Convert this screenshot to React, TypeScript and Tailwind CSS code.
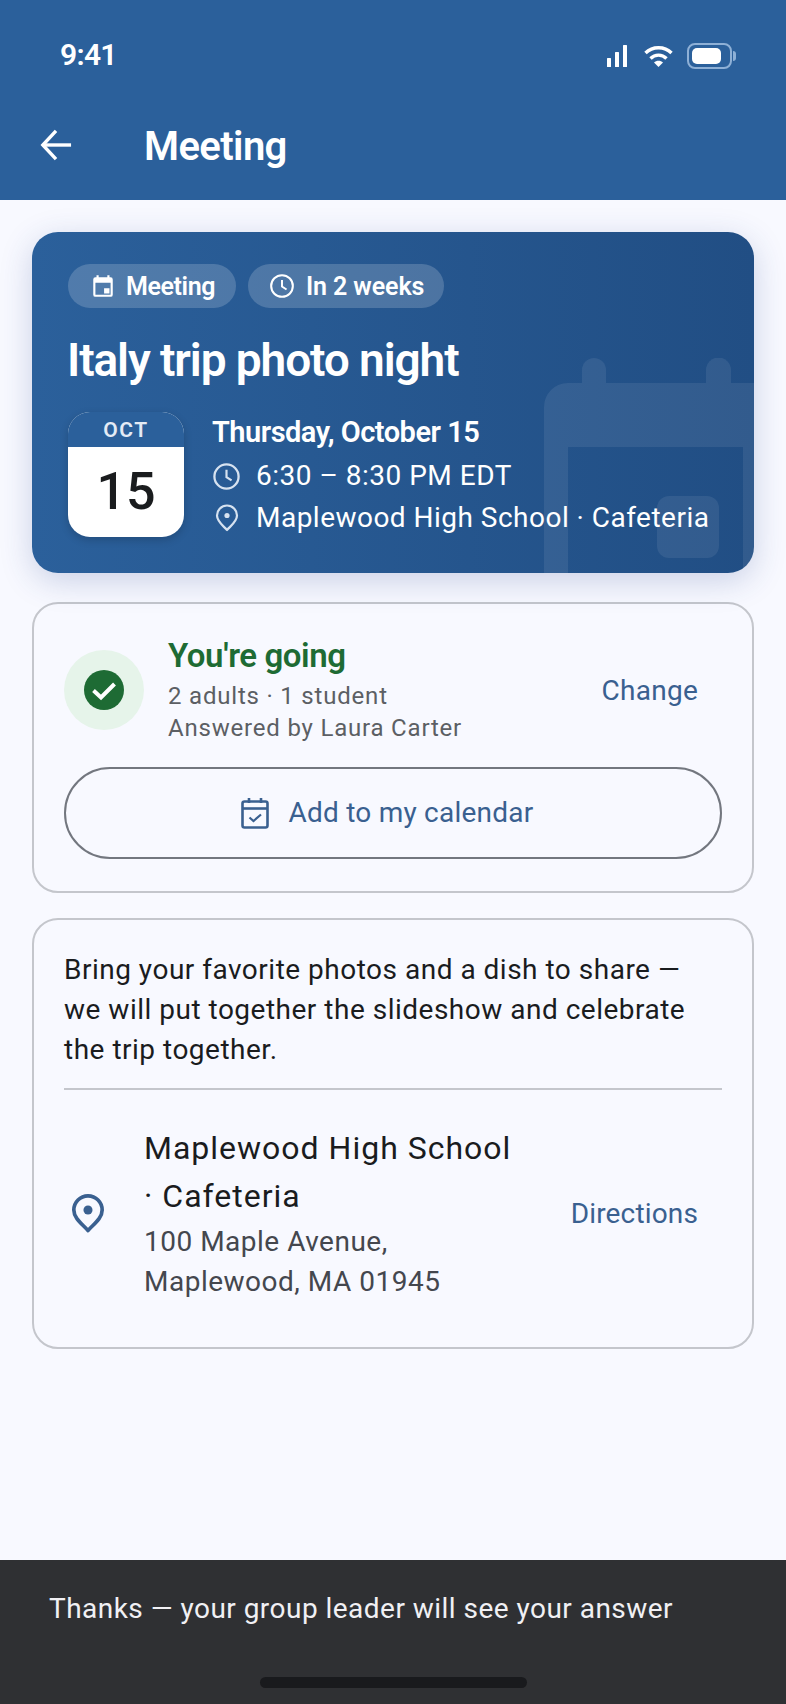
import React from "react";

const F = { fontFamily: "Roboto, sans-serif" };

function Pin({ className, color, sw = 2.6, r = 3.2 }: { className?: string; color: string; sw?: number; r?: number }) {
  return (
    <svg viewBox="0 0 24 28" className={className} fill="none">
      <path d="M12 26 C8 21.5 2 17.5 2 11.5 A10 10 0 0 1 22 11.5 C22 17.5 16 21.5 12 26 Z" stroke={color} strokeWidth={sw} strokeLinejoin="round" />
      <circle cx="12" cy="11.5" r={r} fill={color} />
    </svg>
  );
}

function Clock({ className, color }: { className?: string; color: string }) {
  return (
    <svg viewBox="0 0 24 24" className={className} fill="none">
      <circle cx="12" cy="12" r="10" stroke={color} strokeWidth="1.9" />
      <path d="M12 6.5V12.5L16.2 15.2" stroke={color} strokeWidth="1.8" />
    </svg>
  );
}

export default function App() {
  return (
    <div style={F} className="w-[786px] h-[1704px] flex flex-col bg-[#f8f9ff] overflow-hidden">
      <header className="h-[200px] shrink-0 bg-[#2b609b] text-white flex flex-col">
        <div className="h-[112px] flex items-center justify-between pl-[60px] pr-[50px]">
          <span className="text-[30px] leading-[36px] pb-[3px] font-semibold tracking-[-0.7px]">9:41</span>
          <div className="flex items-center">
            <svg viewBox="0 0 21 22" className="w-[21px] h-[22px]" fill="white">
              <rect x="0" y="13" width="4" height="9" rx="0.5" />
              <rect x="8" y="7" width="4" height="15" rx="0.5" />
              <rect x="16" y="0" width="4" height="22" rx="0.5" />
            </svg>
            <svg viewBox="1 1 28 23" className="w-[31px] h-[23px] ml-[15px]" fill="none" stroke="white" strokeWidth="3.4">
              <path d="M2 9 C9 2 21 2 28 9" />
              <path d="M7 14.5 C11.5 10 18.5 10 23 14.5" />
              <path d="M15 23 L10.5 18.5 C13 16.3 17 16.3 19.5 18.5 Z" fill="white" stroke="none" />
            </svg>
            <div className="flex items-center ml-[13px]">
              <div className="w-[45px] h-[26px] rounded-[8px] border-2 border-[#8eb0d6] p-[3px]">
                <div className="w-[29px] h-full rounded-[5px] bg-white" />
              </div>
              <div className="w-[3px] h-[10px] rounded-r-full bg-[#8eb0d6] ml-[1px]" />
            </div>
          </div>
        </div>
        <div className="flex items-center h-[66px] pl-[40px]">
          <svg viewBox="0 0 34 34" className="w-[32px] h-[32px]" fill="none" stroke="white" strokeWidth="3.6">
            <path d="M33 17H3" />
            <path d="M17 2 L3 17 L17 32" />
          </svg>
          <h1 className="ml-[72px] pt-[4px] text-[40px] font-semibold tracking-[-0.6px] leading-none">Meeting</h1>
        </div>
      </header>

      <main className="flex-1 px-[32px] pt-[32px] flex flex-col">
        <section className="relative h-[341px] rounded-[26px] bg-gradient-to-r from-[#2b609b] to-[#214e84] shadow-[0_8px_32px_rgba(40,70,140,0.22)] overflow-hidden px-[36px] pt-[32px] text-white">
          <svg viewBox="0 0 260 215" className="absolute left-[512px] top-[126px] w-[260px] h-[215px]" fill="rgba(255,255,255,0.08)">
            <path fillRule="evenodd" d="M24 25 H260 V215 H0 V49 A24 24 0 0 1 24 25 Z M24 89 V215 H199 V89 Z" />
            <path d="M38 25 V12 A12 12 0 0 1 62 12 V25 Z" />
            <path d="M162 25 V12 A12 12 0 0 1 187 12 V25 Z" />
            <rect x="113" y="138" width="62" height="62" rx="12" />
          </svg>
          <div className="relative flex gap-[12px]">
            <div className="h-[44px] w-[168px] rounded-full bg-white/[.18] flex items-center pl-[22px]">
              <svg viewBox="0 0 24 24" className="w-[26px] h-[26px]" fill="white">
                <path d="M19 4h-1V2h-2v2H8V2H6v2H5a2 2 0 0 0-2 2v14a2 2 0 0 0 2 2h14a2 2 0 0 0 2-2V6a2 2 0 0 0-2-2Zm0 16H5V9h14v11Zm-6-6h5v5h-5v-5Z" />
              </svg>
              <span className="ml-[10px] pt-[1px] text-[25px] font-semibold tracking-[-0.4px]">Meeting</span>
            </div>
            <div className="h-[44px] w-[196px] rounded-full bg-white/[.18] flex items-center pl-[21px]">
              <Clock className="w-[26px] h-[26px]" color="white" />
              <span className="ml-[11px] pt-[1px] text-[25px] font-semibold tracking-[-0.1px]">In 2 weeks</span>
            </div>
          </div>
          <h2 className="relative mt-[25px] -ml-[1px] text-[46px] leading-[54px] font-semibold tracking-[-1.1px]">Italy trip photo night</h2>
          <div className="relative mt-[25px] flex">
            <div className="w-[116px] h-[125px] rounded-[22px] overflow-hidden bg-white flex flex-col shadow-[0_3px_8px_rgba(0,0,0,0.18)]">
              <div className="h-[35px] pt-[3px] bg-[#2b609b] flex items-center justify-center text-[21px] font-semibold tracking-[1.6px] text-[#e4ebf5]">OCT</div>
              <div className="flex-1 flex items-center justify-center text-[52px] font-medium text-[#1a1c1e]">15</div>
            </div>
            <div className="ml-[28px] flex flex-col">
              <div className="text-[29px] leading-[40px] font-semibold tracking-[-0.5px]">Thursday, October 15</div>
              <div className="flex items-center h-[44px] mt-[2px]">
                <Clock className="w-[29px] h-[29px] shrink-0" color="#d6e2f0" />
                <span className="ml-[15px] text-[28px] tracking-[0.5px]">6:30 – 8:30 PM EDT</span>
              </div>
              <div className="flex items-center h-[40px]">
                <Pin className="w-[24px] h-[28px] ml-[3px] shrink-0" color="#d6e2f0" sw={2.2} r={2.6} />
                <span className="ml-[17px] text-[28px] tracking-[0.48px] whitespace-nowrap">Maplewood High School · Cafeteria</span>
              </div>
            </div>
          </div>
        </section>

        <section className="mt-[29px] h-[291px] rounded-[26px] border-2 border-[#c4c6cc] px-[30px] pt-[31px]">
          <div className="flex items-center h-[110px]">
            <div className="w-[80px] h-[80px] rounded-full bg-[#e6f4ea] flex items-center justify-center shrink-0">
              <svg viewBox="0 0 40 40" className="w-[40px] h-[40px]">
                <circle cx="20" cy="20" r="20" fill="#1e6b34" />
                <path d="M9.5 20.5 L17 27.5 L30.5 14" stroke="white" strokeWidth="4" fill="none" />
              </svg>
            </div>
            <div className="ml-[24px] flex-1 flex flex-col">
              <div className="text-[33px] leading-[40px] font-semibold tracking-[-0.4px] text-[#1e6b34]">You're going</div>
              <div className="mt-[4px] text-[24px] leading-[32px] tracking-[0.8px] text-[#5c5f64]">2 adults · 1 student</div>
              <div className="text-[24px] leading-[32px] tracking-[0.8px] text-[#5c5f64]">Answered by Laura Carter</div>
            </div>
            <div className="text-[28px] pt-[1px] text-[#3a6090] tracking-[0.25px] mr-[24px]">Change</div>
          </div>
          <div className="mt-[22px] h-[92px] rounded-full border-2 border-[#73777f] flex items-center justify-center pr-[12px]">
            <svg viewBox="0 0 28 32" className="w-[28px] h-[32px]" fill="none" stroke="#3a6090" strokeWidth="2.6">
              <rect x="1.5" y="4.5" width="25" height="26" rx="2" />
              <path d="M1.5 11.5H26.5" />
              <path d="M8 1V6M20 1V6" />
              <path d="M8.5 20.5L12.5 24L20 17.5" strokeWidth="2.2" />
            </svg>
            <span className="ml-[20px] text-[28px] text-[#3a6090] tracking-[0.22px]">Add to my calendar</span>
          </div>
        </section>

        <section className="mt-[25px] h-[431px] rounded-[26px] border-2 border-[#c4c6cc] px-[30px] pt-[30px]">
          <p className="text-[28px] leading-[40px] tracking-[0.5px] text-[#1a1c1e]">
            Bring your favorite photos and a dish to share — we will put together the slideshow and celebrate the trip together.
          </p>
          <div className="mt-[18px] h-[2px] bg-[#c4c6cc]" />
          <div className="mt-[34px] flex items-center">
            <Pin className="w-[34px] h-[41px] ml-[7px] shrink-0" color="#3a6090" />
            <div className="ml-[39px] w-[384px] flex flex-col">
              <div className="text-[32px] leading-[48px] tracking-[1px] text-[#1a1c1e]">Maplewood High School · Cafeteria</div>
              <div className="mt-[2px] text-[28px] leading-[40px] tracking-[0.5px] text-[#44474e]">100 Maple Avenue, Maplewood, MA 01945</div>
            </div>
            <div className="ml-auto mr-[24px] pt-[2px] text-[28px] text-[#3a6090] tracking-[0.15px]">Directions</div>
          </div>
        </section>
      </main>

      <footer className="h-[144px] shrink-0 bg-[#2f3033] flex flex-col">
        <div className="pl-[49px] pt-[29px] text-[28px] leading-[40px] tracking-[0.47px] text-[#f1f0f4]">Thanks — your group leader will see your answer</div>
        <div className="mt-[48px] mx-auto w-[267px] h-[11px] rounded-full bg-[#191a1d]" />
      </footer>
    </div>
  );
}
